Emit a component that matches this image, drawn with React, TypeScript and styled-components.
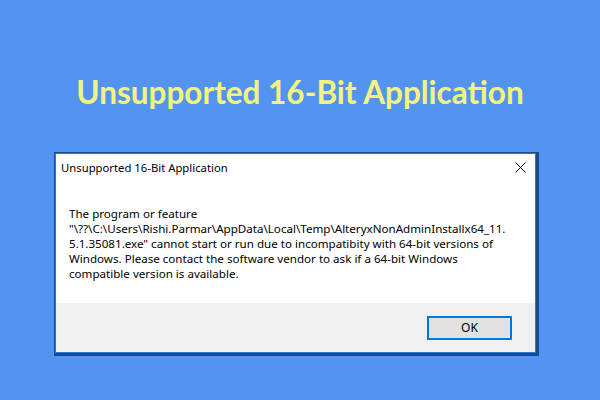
import React from 'react'
import styled, {createGlobalStyle} from 'styled-components'

const GlobalStyle = createGlobalStyle`
  html, body {
    margin: 0;
    padding: 0;
    background: #5394f3;
  }
`

const Page = styled.div`
  width: 600px;
  height: 400px;
  background: #5394f3;
  display: flex;
  flex-direction: column;
  overflow: hidden;
`

const Heading = styled.h1`
  margin: 0;
  padding-top: 72px;
  height: 80px;
  text-align: center;
  font-family: Lato, "Noto Sans", sans-serif;
  font-weight: 700;
  font-size: 31.5px;
  line-height: 40px;
  color: #f3f47b;
`

const Frame = styled.div`
  margin-left: 54px;
  width: 481px;
  padding: 1px 3px 3px 1px;
  background: #1c4c8e;
`

const Window = styled.div`
  border: 1px solid #1a80d6;
  background: #ffffff;
  display: flex;
  flex-direction: column;
  font-family: "Noto Sans", sans-serif;
  font-size: 11.6px;
  color: #000;
`

const TitleBar = styled.div`
  height: 26px;
  display: flex;
  align-items: center;
  justify-content: space-between;
  padding: 0 9px 0 5px;
`

const TitleText = styled.span`
  font-size: 11.3px;
  line-height: 16px;
  padding-top: 1px;
`

const CloseButton = styled.div`
  width: 11px;
  height: 11px;
  display: flex;
`

const Message = styled.div`
  padding: 26px 13px 22px 13px;
  line-height: 15px;
  white-space: nowrap;
`

const Footer = styled.div`
  height: 49px;
  background: #f0f0f0;
  display: flex;
  align-items: center;
  justify-content: flex-end;
  padding-right: 23px;
`

const Button = styled.div`
  box-sizing: border-box;
  width: 85px;
  height: 24px;
  border: 2px solid #0078d7;
  background: #e1e1e1;
  display: flex;
  align-items: center;
  justify-content: center;
  font-size: 12px;
`

const lines = [
    'The program or feature',
    '"\\??\\C:\\Users\\Rishi.Parmar\\AppData\\Local\\Temp\\AlteryxNonAdminInstallx64_11.',
    '5.1.35081.exe" cannot start or run due to incompatibity with 64-bit versions of',
    'Windows. Please contact the software vendor to ask if a 64-bit Windows',
    'compatible version is available.',
]

export default function App() {
    return <Page>
        <GlobalStyle/>
        <Heading>Unsupported 16-Bit Application</Heading>
        <Frame>
            <Window>
                <TitleBar>
                    <TitleText>Unsupported 16-Bit Application</TitleText>
                    <CloseButton>
                        <svg width="11" height="11" viewBox="0 0 11 11">
                            <path d="M0.5 0.5 L10.5 10.5 M10.5 0.5 L0.5 10.5" stroke="#000" strokeWidth="1" fill="none"/>
                        </svg>
                    </CloseButton>
                </TitleBar>
                <Message>
                    {lines.map((l, i) => <div key={i}>{l}</div>)}
                </Message>
                <Footer>
                    <Button>OK</Button>
                </Footer>
            </Window>
        </Frame>
    </Page>
}
